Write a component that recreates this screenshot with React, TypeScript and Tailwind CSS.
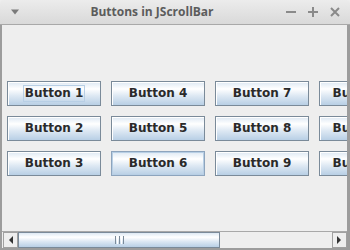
import React from "react";

const btnBg =
  "bg-[linear-gradient(to_bottom,#dde8f3_0%,#ffffff_30%,#dde8f3_60%,#b8cfe5_100%)]";

function JButton({ label, focus, roll }: { label: string; focus?: boolean; roll?: boolean }) {
  return (
    <div
      className={`w-[94px] h-[25px] shrink-0 flex items-center justify-center border ${
        roll ? "border-[#8da4bd] shadow-[inset_0_0_0_1px_#b8cfe5]" : "border-[#7a8a99] shadow-[inset_1px_1px_0_#ffffff]"
      } ${btnBg}`}
    >
      <span
        className={`text-[12px] leading-[15px] font-bold text-[#2a2a2a] px-[1px] ${
          focus ? "outline outline-1 outline-[#b8cfe5]" : ""
        }`}
        style={{ fontFamily: '"DejaVu Sans", sans-serif' }}
      >
        {label}
      </span>
    </div>
  );
}

export default function App() {
  const rows = [
    ["Button 1", "Button 4", "Button 7", "Button 10"],
    ["Button 2", "Button 5", "Button 8", "Button 11"],
    ["Button 3", "Button 6", "Button 9", "Button 12"],
  ];
  return (
    <div className="w-[350px] h-[250px] flex flex-col bg-[#eeeeee] overflow-hidden" style={{ fontFamily: '"DejaVu Sans", sans-serif' }}>
      {/* title bar */}
      <div className="h-[25px] shrink-0 flex items-center rounded-t-[4px] bg-[linear-gradient(to_bottom,#ececec,#d9d9d9)] border-b border-[#a8a8a8] text-[#6e6e6e]">
        <div className="w-[30px] flex justify-center">
          <svg width="10" height="6" viewBox="0 0 10 6">
            <polygon points="1,0.5 9,0.5 5,5.5" fill="#7a7a7a" />
          </svg>
        </div>
        <div
          className="flex-1 text-center text-[12px] font-bold text-[#5c5c5c] pr-[12px]"
          style={{ fontFamily: '"Open Sans", sans-serif' }}
        >
          Buttons in JScrollBar
        </div>
        <div className="flex items-center gap-[12px] pr-[10px]">
          <svg width="10" height="10" viewBox="0 0 10 10">
            <rect x="0" y="4" width="10" height="2" fill="#8a8a8a" />
          </svg>
          <svg width="10" height="10" viewBox="0 0 10 10">
            <rect x="0" y="4" width="10" height="2" fill="#8a8a8a" />
            <rect x="4" y="0" width="2" height="10" fill="#8a8a8a" />
          </svg>
          <svg width="10" height="10" viewBox="0 0 10 10">
            <path d="M1 1 L9 9 M9 1 L1 9" stroke="#8a8a8a" strokeWidth="2" />
          </svg>
        </div>
      </div>
      {/* body */}
      <div className="flex-1 flex flex-col border-l-2 border-r-[3px] border-b-2 border-[#9c9c9c]">
        <div className="flex-1 flex flex-col justify-center gap-[10px] pl-[5px] overflow-hidden">
          {rows.map((r, i) => (
            <div key={i} className="flex gap-[10px]">
              {r.map((b) => (
                <JButton key={b} label={b} focus={b === "Button 1"} roll={b === "Button 6"} />
              ))}
            </div>
          ))}
        </div>
        {/* scrollbar */}
        <div className="h-[17px] shrink-0 flex border-t border-[#a8a8a8] bg-[#eeeeee] pl-[1px]">
          <div className="w-[15px] h-full flex items-center justify-center border border-[#a0a0a0] bg-[#eeeeee]">
            <svg width="5" height="8" viewBox="0 0 5 8">
              <polygon points="5,0 5,8 1,4" fill="#333333" />
            </svg>
          </div>
          <div className="w-[202px] h-full flex items-center justify-center border border-[#7a8a99] bg-[linear-gradient(to_bottom,#dde8f3_0%,#ffffff_30%,#dde8f3_60%,#b8cfe5_100%)]">
            <div className="flex gap-[1px] h-[8px]">
              <div className="w-[1px] bg-[#7a8a99]" />
              <div className="w-[1px] bg-[#ffffff]" />
              <div className="w-[1px] bg-[#7a8a99]" />
              <div className="w-[1px] bg-[#ffffff]" />
              <div className="w-[1px] bg-[#7a8a99]" />
            </div>
          </div>
          <div className="flex-1" />
          <div className="w-[15px] h-full flex items-center justify-center border border-[#a0a0a0] bg-[#eeeeee]">
            <svg width="5" height="8" viewBox="0 0 5 8">
              <polygon points="0,0 0,8 4,4" fill="#333333" />
            </svg>
          </div>
        </div>
      </div>
    </div>
  );
}
